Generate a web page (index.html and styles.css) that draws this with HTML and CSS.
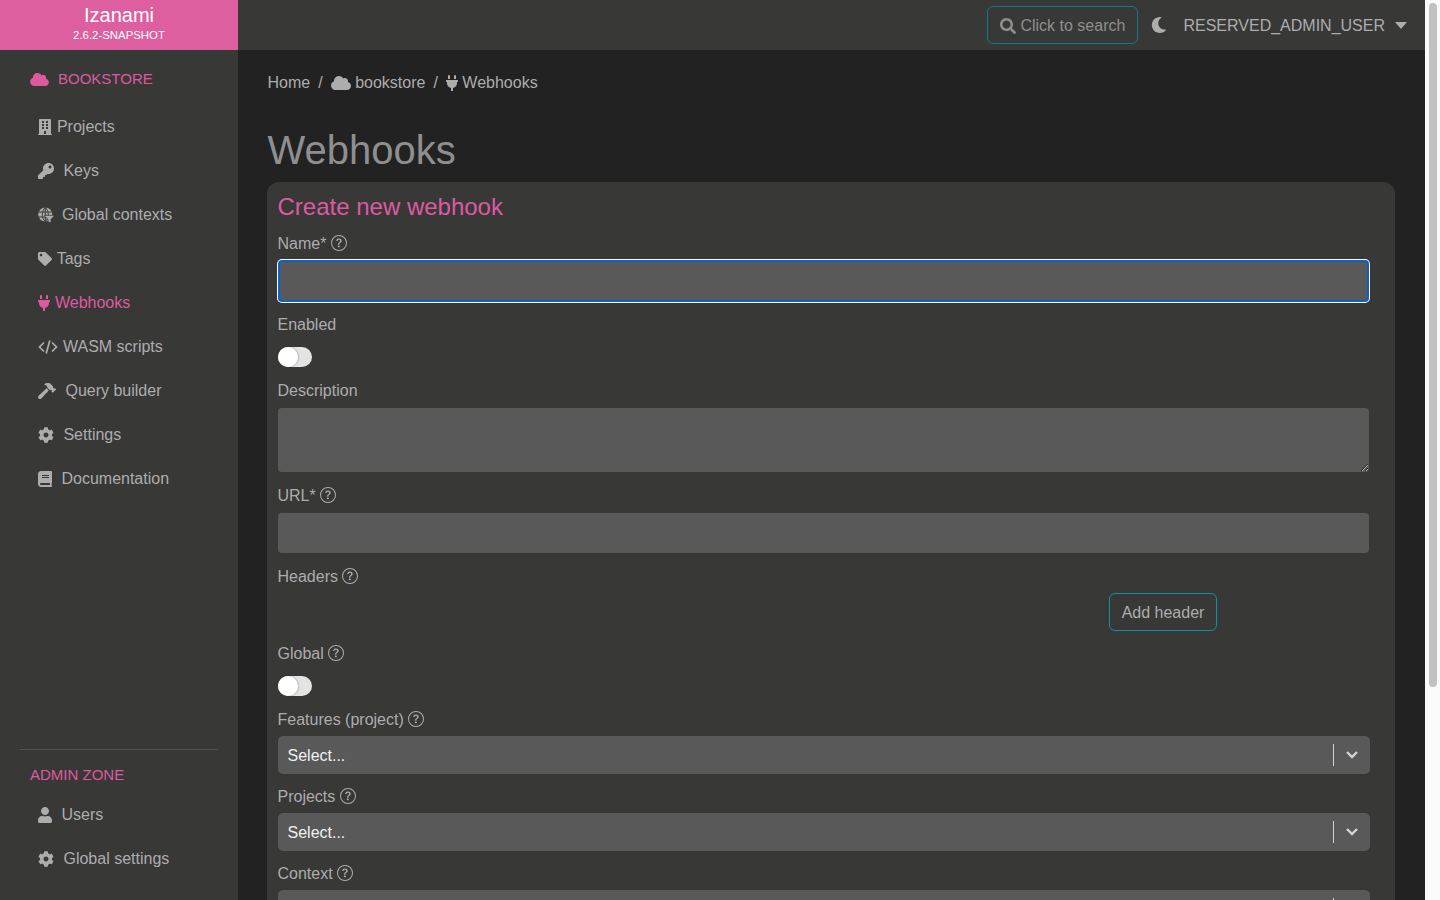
FILE: index.html
```html
<!DOCTYPE html>
<html lang="en">
<head>
    <meta charset="UTF-8">
    <meta name="viewport" content="width=device-width, initial-scale=1.0">
    <title>Izanami - Webhooks</title>
    <link rel="stylesheet" href="styles.css">
</head>
<body>
    <svg class="sprites" xmlns="http://www.w3.org/2000/svg">
        <symbol id="i-cloud" viewBox="0 0 640 512"><path d="M537.6 226.6c4.1-10.7 6.4-22.4 6.4-34.6 0-53-43-96-96-96-19.7 0-38.1 6-53.3 16.2C367 64.2 315.3 32 256 32c-88.4 0-160 71.6-160 160 0 2.7.1 5.4.2 8.1C40.2 219.8 0 273.2 0 336c0 79.5 64.5 144 144 144h368c70.7 0 128-57.3 128-128 0-61.9-44-113.6-102.4-125.4z"/></symbol>
        <symbol id="i-building" viewBox="0 0 448 512"><path d="M436 480h-20V24c0-13.255-10.745-24-24-24H56C42.745 0 32 10.745 32 24v456H12c-6.627 0-12 5.373-12 12v20h448v-20c0-6.627-5.373-12-12-12zM128 76c0-6.627 5.373-12 12-12h40c6.627 0 12 5.373 12 12v40c0 6.627-5.373 12-12 12h-40c-6.627 0-12-5.373-12-12V76zm0 96c0-6.627 5.373-12 12-12h40c6.627 0 12 5.373 12 12v40c0 6.627-5.373 12-12 12h-40c-6.627 0-12-5.373-12-12v-40zm52 148h-40c-6.627 0-12-5.373-12-12v-40c0-6.627 5.373-12 12-12h40c6.627 0 12 5.373 12 12v40c0 6.627-5.373 12-12 12zm76 160h-64v-84c0-6.627 5.373-12 12-12h40c6.627 0 12 5.373 12 12v84zm64-172c0 6.627-5.373 12-12 12h-40c-6.627 0-12-5.373-12-12v-40c0-6.627 5.373-12 12-12h40c6.627 0 12 5.373 12 12v40zm0-96c0 6.627-5.373 12-12 12h-40c-6.627 0-12-5.373-12-12v-40c0-6.627 5.373-12 12-12h40c6.627 0 12 5.373 12 12v40zm0-96c0 6.627-5.373 12-12 12h-40c-6.627 0-12-5.373-12-12V76c0-6.627 5.373-12 12-12h40c6.627 0 12 5.373 12 12v40z"/></symbol>
        <symbol id="i-key" viewBox="0 0 512 512"><path d="M512 176.001C512 273.203 433.202 352 336 352c-11.22 0-22.19-1.062-32.827-3.069l-24.012 27.014A23.999 23.999 0 0 1 261.223 384H224v40c0 13.255-10.745 24-24 24h-40v40c0 13.255-10.745 24-24 24H24c-13.255 0-24-10.745-24-24v-78.059c0-6.365 2.529-12.47 7.029-16.971l161.802-161.802C163.108 213.814 160 195.271 160 176 160 78.798 238.797.001 335.999 0 433.488-.001 512 78.511 512 176.001zM336 128c0 26.51 21.49 48 48 48s48-21.49 48-48-21.49-48-48-48-48 21.49-48 48z"/></symbol>
        <symbol id="i-context" viewBox="0 0 16 16">
            <circle cx="7.300" cy="7.500" r="7"/>
            <path d="M7.300.5v14M.3 5h14M.3 10h14M7.300.5c-4 3.500-4 10.500 0 14M7.300.5c4 3.500 4 10.500 0 14" fill="none" stroke="#383837" stroke-width="1"/>
            <path d="M6.500 8.300H16v1L13 12.300v3.700l-3-1.300v-2.400L6.500 9.300z" stroke="#383837" stroke-width=".8"/>
        </symbol>
        <symbol id="i-tag" viewBox="0 0 512 512"><path d="M0 252.118V48C0 21.49 21.49 0 48 0h204.118a48 48 0 0 1 33.941 14.059l211.882 211.882c18.745 18.745 18.745 49.137 0 67.882L293.823 497.941c-18.745 18.745-49.137 18.745-67.882 0L14.059 286.059A48 48 0 0 1 0 252.118zM112 64c-26.51 0-48 21.49-48 48s21.49 48 48 48 48-21.49 48-48-21.49-48-48-48z"/></symbol>
        <symbol id="i-plug" viewBox="0 0 384 512"><path d="M320,32a32,32,0,0,0-64,0v96h64Zm48,128H16A16,16,0,0,0,0,176v32a16,16,0,0,0,16,16H32v32A160.07,160.07,0,0,0,160,412.8V512h64V412.8A160.07,160.07,0,0,0,352,256V224h16a16,16,0,0,0,16-16V176A16,16,0,0,0,368,160ZM128,32a32,32,0,0,0-64,0v96h64Z"/></symbol>
        <symbol id="i-code" viewBox="0 0 20 16"><path d="M6 3.500 1.500 8 6 12.500M14 3.500 18.500 8 14 12.500M11.800 1.500 8.200 14.500" fill="none" stroke="currentColor" stroke-width="1.700"/></symbol>
        <symbol id="i-hammer" viewBox="0 0 576 512"><path d="M571.31 193.94l-22.63-22.63c-6.25-6.25-16.38-6.25-22.63 0l-11.31 11.31-28.9-28.9c5.63-21.31.36-44.9-16.35-61.61l-45.25-45.25c-62.48-62.48-163.79-62.48-226.28 0l90.51 45.25v18.75c0 16.97 6.74 33.25 18.75 45.25l49.14 49.14c16.71 16.71 40.3 21.98 61.61 16.35l28.9 28.9-11.31 11.31c-6.25 6.25-6.25 16.38 0 22.63l22.63 22.63c6.25 6.25 16.38 6.25 22.63 0l90.51-90.51c6.23-6.24 6.23-16.37-.02-22.62zm-286.72-15.2c-3.7-3.7-6.84-7.79-9.85-11.95L19.64 404.96c-25.57 23.88-26.26 64.19-1.53 88.93s65.05 24.05 88.93-1.53l238.13-255.07c-3.96-2.91-7.9-5.87-11.44-9.41l-49.14-49.14z"/></symbol>
        <symbol id="i-gear" viewBox="0 0 512 512"><path d="M487.4 315.7l-42.6-24.6c4.3-23.2 4.3-47 0-70.2l42.6-24.6c4.9-2.8 7.1-8.6 5.5-14-11.1-35.6-30-67.8-54.7-94.6-3.8-4.1-10-5.1-14.8-2.3L380.8 110c-17.9-15.4-38.5-27.3-60.8-35.1V25.8c0-5.6-3.9-10.5-9.4-11.7-36.7-8.2-74.3-7.8-109.2 0-5.5 1.2-9.4 6.1-9.4 11.7V75c-22.2 7.9-42.8 19.8-60.8 35.1L88.7 85.5c-4.9-2.8-11-1.9-14.8 2.3-24.7 26.7-43.6 58.9-54.7 94.6-1.7 5.4.6 11.2 5.5 14L67.3 221c-4.3 23.2-4.3 47 0 70.2l-42.6 24.6c-4.9 2.8-7.1 8.6-5.5 14 11.1 35.6 30 67.8 54.7 94.6 3.8 4.1 10 5.1 14.8 2.3l42.6-24.6c17.9 15.4 38.5 27.3 60.8 35.1v49.2c0 5.6 3.9 10.5 9.4 11.7 36.7 8.2 74.3 7.8 109.2 0 5.5-1.2 9.4-6.1 9.4-11.7v-49.2c22.2-7.9 42.8-19.8 60.8-35.1l42.6 24.6c4.9 2.8 11 1.9 14.8-2.3 24.7-26.7 43.6-58.9 54.7-94.6 1.5-5.5-.7-11.3-5.6-14.1zM256 336c-44.1 0-80-35.9-80-80s35.9-80 80-80 80 35.9 80 80-35.9 80-80 80z"/></symbol>
        <symbol id="i-book" viewBox="0 0 448 512"><path d="M448 360V24c0-13.3-10.7-24-24-24H96C43 0 0 43 0 96v320c0 53 43 96 96 96h328c13.3 0 24-10.7 24-24v-16c0-7.5-3.5-14.3-8.9-18.7-4.2-15.4-4.2-59.3 0-74.7 5.4-4.3 8.9-11.1 8.9-18.6zM128 134c0-3.3 2.7-6 6-6h212c3.3 0 6 2.7 6 6v20c0 3.3-2.7 6-6 6H134c-3.3 0-6-2.7-6-6v-20zm0 64c0-3.3 2.7-6 6-6h212c3.3 0 6 2.7 6 6v20c0 3.3-2.7 6-6 6H134c-3.3 0-6-2.7-6-6v-20zm253.4 250H96c-17.7 0-32-14.3-32-32 0-17.6 14.4-32 32-32h285.4c-1.9 17.1-1.9 46.9 0 64z"/></symbol>
        <symbol id="i-user" viewBox="0 0 448 512"><path d="M224 256c70.7 0 128-57.3 128-128S294.7 0 224 0 96 57.3 96 128s57.3 128 128 128zm89.6 32h-16.7c-22.2 10.2-46.9 16-72.9 16s-50.6-5.8-72.9-16h-16.7C60.2 288 0 348.2 0 422.4V464c0 26.5 21.5 48 48 48h352c26.5 0 48-21.5 48-48v-41.6c0-74.2-60.2-134.4-134.4-134.4z"/></symbol>
        <symbol id="i-search" viewBox="0 0 512 512"><path d="M505 442.7L405.3 343c-4.5-4.5-10.6-7-17-7H372c27.6-35.3 44-79.7 44-128C416 93.1 322.9 0 208 0S0 93.1 0 208s93.1 208 208 208c48.3 0 92.7-16.4 128-44v16.3c0 6.4 2.5 12.5 7 17l99.7 99.7c9.4 9.4 24.6 9.4 33.9 0l28.3-28.3c9.4-9.4 9.4-24.6.1-34zM208 336c-70.7 0-128-57.2-128-128 0-70.7 57.2-128 128-128 70.7 0 128 57.2 128 128 0 70.7-57.2 128-128 128z"/></symbol>
        <symbol id="i-moon" viewBox="0 0 512 512"><path d="M283.211 512c78.962 0 151.079-35.925 198.857-94.792 7.068-8.708-.639-21.43-11.562-19.35-124.203 23.654-238.262-71.576-238.262-196.954 0-72.222 38.662-138.635 101.498-174.394 9.686-5.512 7.25-20.197-3.756-22.23A258.156 258.156 0 0 0 283.211 0c-141.309 0-256 114.511-256 256 0 141.309 114.511 256 256 256z"/></symbol>
        <symbol id="i-help" viewBox="0 0 16 16"><path d="M8 15A7 7 0 1 1 8 1a7 7 0 0 1 0 14m0 1A8 8 0 1 0 8 0a8 8 0 0 0 0 16"/><path d="M5.255 5.786a.237.237 0 0 0 .241.247h.825c.138 0 .248-.113.266-.25.09-.656.54-1.134 1.342-1.134.686 0 1.314.343 1.314 1.168 0 .635-.374.927-.965 1.371-.673.489-1.206 1.06-1.168 1.987l.003.217a.25.25 0 0 0 .25.246h.811a.25.25 0 0 0 .25-.25v-.105c0-.718.273-.927 1.01-1.486.609-.463 1.244-.977 1.244-2.056 0-1.511-1.276-2.241-2.673-2.241-1.267 0-2.655.59-2.75 2.286m1.557 5.763c0 .533.425.927 1.01.927.609 0 1.028-.394 1.028-.927 0-.552-.42-.94-1.029-.94-.584 0-1.009.388-1.009.94"/></symbol>
        <symbol id="i-chevron" viewBox="0 0 12 8"><path d="M1 1 6 6l5-5" fill="none" stroke="currentColor" stroke-width="2.400"/></symbol>
    </svg>

    <div class="app">
        <aside class="sidebar">
            <div class="logo">
                <div class="logo-name">Izanami</div>
                <div class="logo-version">2.6.2-SNAPSHOT</div>
            </div>
            <nav class="nav">
                <a class="tenant"><svg class="ic-cloud"><use href="#i-cloud"/></svg>BOOKSTORE</a>
                <a class="nav-item"><svg class="ic-14 gap-5"><use href="#i-building"/></svg> Projects</a>
                <a class="nav-item"><svg class="ic-16 gap-9"><use href="#i-key"/></svg> Keys</a>
                <a class="nav-item"><svg class="ic-16 gap-8"><use href="#i-context"/></svg> Global contexts</a>
                <a class="nav-item"><svg class="ic-14 gap-5"><use href="#i-tag"/></svg> Tags</a>
                <a class="nav-item active"><svg class="ic-12 gap-5"><use href="#i-plug"/></svg> Webhooks</a>
                <a class="nav-item"><svg class="ic-20 gap-5"><use href="#i-code"/></svg> WASM scripts</a>
                <a class="nav-item"><svg class="ic-18 gap-9"><use href="#i-hammer"/></svg> Query builder</a>
                <a class="nav-item"><svg class="ic-16 gap-9"><use href="#i-gear"/></svg> Settings</a>
                <a class="nav-item"><svg class="ic-14 gap-9"><use href="#i-book"/></svg> Documentation</a>
            </nav>
            <div class="admin">
                <div class="admin-title">ADMIN ZONE</div>
                <a class="nav-item"><svg class="ic-14 gap-9"><use href="#i-user"/></svg> Users</a>
                <a class="nav-item"><svg class="ic-16 gap-9"><use href="#i-gear"/></svg> Global settings</a>
            </div>
        </aside>

        <div class="page">
            <header class="topbar">
                <button class="search-btn"><svg class="ic-16"><use href="#i-search"/></svg>Click to search</button>
                <svg class="moon"><use href="#i-moon"/></svg>
                <span class="username">RESERVED_ADMIN_USER</span>
                <span class="caret"></span>
            </header>

            <main class="content">
                <div class="breadcrumb">
                    <span>Home</span>
                    <span>/</span>
                    <span class="crumb"><svg class="ic-cloud-sm"><use href="#i-cloud"/></svg>bookstore</span>
                    <span>/</span>
                    <span class="crumb"><svg class="ic-12"><use href="#i-plug"/></svg>Webhooks</span>
                </div>
                <h1>Webhooks</h1>

                <form class="card">
                    <h2>Create new webhook</h2>

                    <div class="field">
                        <label>Name* <svg class="help"><use href="#i-help"/></svg></label>
                        <input type="text" class="input focused">
                    </div>
                    <div class="field">
                        <label class="label-toggle">Enabled</label>
                        <div class="toggle"><span class="knob"></span></div>
                    </div>
                    <div class="field">
                        <label>Description</label>
                        <textarea class="input area"></textarea>
                    </div>
                    <div class="field">
                        <label>URL* <svg class="help"><use href="#i-help"/></svg></label>
                        <input type="text" class="input">
                    </div>
                    <div class="field compact">
                        <label>Headers <svg class="help"><use href="#i-help"/></svg></label>
                        <div class="header-row"><button type="button" class="add-btn">Add header</button></div>
                    </div>
                    <div class="field">
                        <label class="label-toggle">Global <svg class="help"><use href="#i-help"/></svg></label>
                        <div class="toggle"><span class="knob"></span></div>
                    </div>
                    <div class="field compact">
                        <label>Features (project) <svg class="help"><use href="#i-help"/></svg></label>
                        <div class="select"><span class="select-value">Select...</span><span class="select-sep"></span><svg class="chevron"><use href="#i-chevron"/></svg></div>
                    </div>
                    <div class="field compact">
                        <label>Projects <svg class="help"><use href="#i-help"/></svg></label>
                        <div class="select"><span class="select-value">Select...</span><span class="select-sep"></span><svg class="chevron"><use href="#i-chevron"/></svg></div>
                    </div>
                    <div class="field compact">
                        <label>Context <svg class="help"><use href="#i-help"/></svg></label>
                        <div class="select"><span class="select-value">Select...</span><span class="select-sep"></span><svg class="chevron"><use href="#i-chevron"/></svg></div>
                    </div>
                </form>
            </main>
        </div>

        <div class="scrollbar"><div class="thumb"></div></div>
    </div>
</body>
</html>
```

FILE: styles.css
```css
* {
    box-sizing: border-box;
}
html, body {
    height: 900px;
    margin: 0;
    overflow: hidden;
}
body {
    font-family: "Liberation Sans", Arial, sans-serif;
    font-size: 16px;
    line-height: 24px;
    color: #adadad;
    background: #222222;
}
svg {
    fill: currentColor;
}
.sprites {
    display: none;
}
.app {
    display: flex;
    height: 900px;
}

/* sidebar */
.sidebar {
    width: 238px;
    flex: none;
    display: flex;
    flex-direction: column;
    background: #383837;
}
.logo {
    height: 50px;
    padding-top: 4px;
    background: #dd5f9f;
    color: #fff;
    text-align: center;
}
.logo-name {
    font-size: 20px;
    line-height: 23px;
}
.logo-version {
    font-size: 11.4px;
    line-height: 17px;
}
.nav {
    flex: 1;
    padding-top: 3px;
}
.tenant {
    display: flex;
    align-items: center;
    height: 52px;
    padding-left: 30px;
    font-size: 15px;
    color: #de5aa0;
}
.ic-cloud {
    width: 19px;
    height: 15px;
    margin-right: 9px;
}
.nav-item {
    display: flex;
    align-items: center;
    height: 44px;
    padding-left: 38px;
    white-space: pre;
}
.nav-item.active {
    color: #de5aa0;
}
.ic-12, .ic-14, .ic-16, .ic-18, .ic-20 {
    height: 16px;
    flex: none;
}
.ic-12 { width: 12px; }
.ic-14 { width: 14px; }
.ic-16 { width: 16px; }
.ic-18 { width: 18px; }
.ic-20 { width: 20px; }
.gap-5 { margin-right: 0.5px; }
.gap-8 { margin-right: 3.5px; }
.gap-9 { margin-right: 5px; }
.admin {
    margin: 0 20px;
    padding-bottom: 19px;
    border-top: 1px solid #525252;
}
.admin .nav-item {
    padding-left: 18px;
}
.admin-title {
    margin: 13px 0 6px;
    padding-left: 10px;
    font-size: 15px;
    color: #de5aa0;
}

/* top bar */
.page {
    flex: 1;
    min-width: 0;
    display: flex;
    flex-direction: column;
}
.topbar {
    height: 50px;
    flex: none;
    display: flex;
    align-items: center;
    justify-content: flex-end;
    padding-right: 18px;
    background: #383837;
}
.search-btn {
    display: flex;
    align-items: center;
    gap: 4px;
    height: 38px;
    width: 151px;
    padding: 2px 12px 0;
    border: 1px solid #13788c;
    border-radius: 6px;
    background: none;
    color: #8f8f8f;
    font: inherit;
}
.moon {
    width: 16px;
    height: 16px;
    margin: 0 16px 0 13px;
}
.username {
    padding-top: 2px;
}
.caret {
    width: 0;
    height: 0;
    margin-left: 10px;
    border-style: solid;
    border-width: 7px 6.5px 0;
    border-color: #adadad transparent transparent;
}

/* main */
.content {
    flex: 1;
    min-height: 0;
    overflow: hidden;
    padding: 21px 30px 0 29px;
}
.breadcrumb {
    display: flex;
    gap: 8px;
    height: 24px;
    margin-bottom: 31px;
    padding-left: 0.5px;
}
.crumb {
    display: flex;
    align-items: center;
    gap: 4.5px;
}
.ic-cloud-sm {
    width: 20px;
    height: 16px;
}
h1 {
    margin: 0 0 8px;
    padding-left: 0.5px;
    font-size: 40px;
    line-height: 48px;
    font-weight: 400;
    color: #8f8f8f;
}
.card {
    padding: 10px 25.5px 0 10.5px;
    border-radius: 12px;
    background: #383837;
}
h2 {
    margin: 0 0 10px;
    font-size: 24px;
    line-height: 29px;
    font-weight: 400;
    color: #de5aa0;
}

/* form */
.field {
    margin-bottom: 11px;
}
.field label {
    display: block;
    height: 24px;
    line-height: 26px;
    margin-bottom: 6px;
}
.field .label-toggle {
    margin-bottom: 11px;
}
.field.compact {
    margin-bottom: 10px;
}
.field.compact label {
    margin-bottom: 5px;
}
.help {
    width: 16px;
    height: 16px;
    vertical-align: -2px;
}
.input {
    display: block;
    width: calc(100% - 1px);
    height: 40px;
    padding: 8px 12px;
    border: none;
    border-radius: 4px;
    background: #595959;
    color: #fff;
    font: inherit;
    outline: none;
}
.input.focused {
    height: 42px;
    margin: -1px 0;
    border: 2px solid #0a62c9;
    box-shadow: 0 0 0 1px #fff;
}
.area {
    height: 64px;
}
.toggle {
    width: 34px;
    height: 20px;
    border-radius: 10px;
    background: #e4e4e4;
}
.knob {
    display: block;
    width: 20px;
    height: 20px;
    border-radius: 50%;
    background: #fff;
    box-shadow: 1px 0 2px rgba(0,0,0,0.2);
}
.header-row {
    display: flex;
    justify-content: flex-end;
    padding-right: 152.5px;
}
.add-btn {
    width: 108px;
    height: 38px;
    padding: 2px 0 0;
    border: 1px solid #0b93a8;
    border-radius: 6px;
    background: none;
    color: #adadad;
    font: inherit;
}
.select {
    display: flex;
    align-items: center;
    height: 38px;
    padding: 0 12px 0 10px;
    border-radius: 5px;
    background: #595959;
}
.select-value {
    flex: 1;
    padding-top: 2px;
    color: #f0f0f0;
}
.select-sep {
    width: 1px;
    height: 22px;
    margin-right: 12px;
    background: #d0d0d0;
}
.chevron {
    width: 12px;
    height: 8px;
    color: #d4d4d4;
}

/* scrollbar */
.scrollbar {
    width: 15px;
    flex: none;
    padding: 3px 3px 0 4px;
    background: #fafafa;
}
.thumb {
    height: 684px;
    border-radius: 4px;
    background: #c1c1c1;
}
```
